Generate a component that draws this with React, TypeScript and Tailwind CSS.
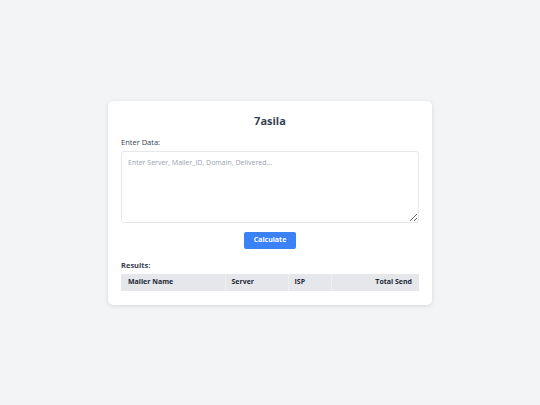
export default function App() {
  return (
    <div className="min-h-screen bg-gray-100 flex items-center justify-center font-['Open_Sans','Noto_Sans',sans-serif]">
      <div className="w-[324px] bg-white rounded-[5px] shadow-[0_1px_4px_rgba(0,0,0,0.12)] px-[13px] pt-[12px] pb-[14px]">
        {/* Title */}
        <h1 className="text-center text-[11px] leading-[16px] font-bold text-gray-700">7asila</h1>

        {/* Input */}
        <label className="block mt-[8px] text-[7.5px] leading-[11px] text-gray-700">Enter Data:</label>
        <textarea
          className="block mt-[3px] w-full h-[72px] border border-gray-200 rounded-[3px] px-[6px] py-[6px] text-[7px] leading-[9px] text-gray-700 placeholder:text-gray-400 outline-none"
          placeholder="Enter Server, Mailer_ID, Domain, Delivered..."
        />

        <div className="flex justify-center mt-[9px]">
          <button className="w-[52px] h-[17px] bg-[#3b82f6] rounded-[2px] text-white text-[7px] font-bold">
            Calculate
          </button>
        </div>

        {/* Results */}
        <h2 className="mt-[11px] text-[7.5px] leading-[11px] font-bold text-gray-700">Results:</h2>
        <table className="mt-[3px] w-full table-fixed text-[7px] text-gray-800">
          <thead>
            <tr className="bg-gray-200 h-[17px]">
              <th className="w-[104px] text-left font-bold px-[7px]">Mailer Name</th>
              <th className="w-[63px] text-left font-bold px-[6px] border-l border-[#eef0f2]">Server</th>
              <th className="w-[43px] text-left font-bold px-[6px] border-l border-[#eef0f2]">ISP</th>
              <th className="text-right font-bold px-[7px] border-l border-[#eef0f2]">Total Send</th>
            </tr>
          </thead>
          <tbody></tbody>
        </table>
      </div>
    </div>
  );
}
